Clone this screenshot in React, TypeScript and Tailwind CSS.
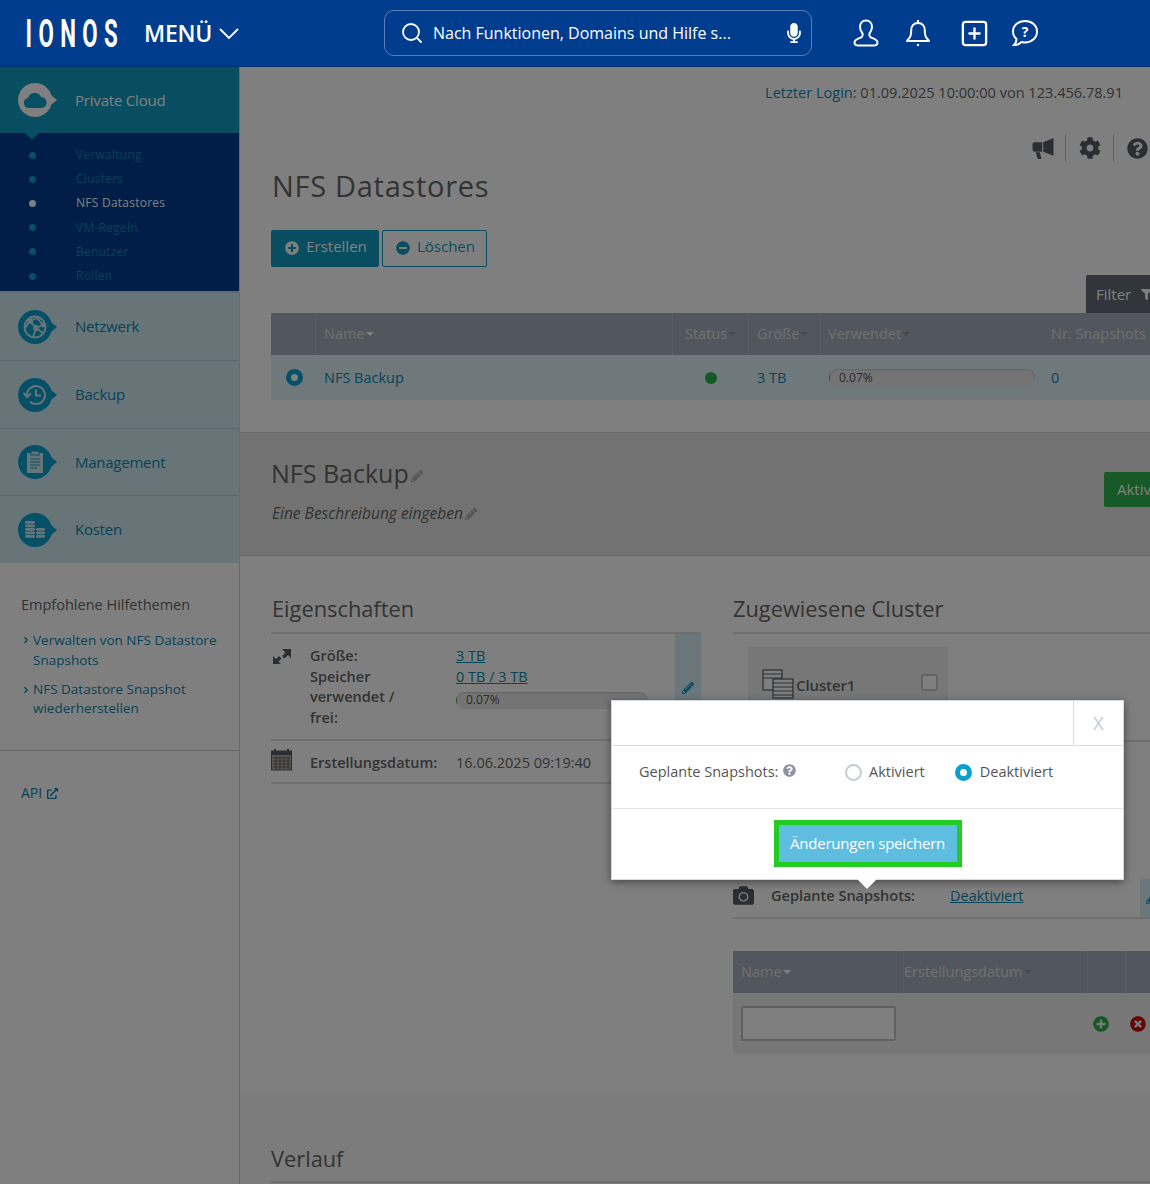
import React from "react";
import { Search, SquarePlus, ChevronRight } from "lucide-react";
import { FaCog, FaQuestionCircle, FaCamera, FaPencilAlt, FaPlusCircle, FaMinusCircle, FaTimesCircle, FaMicrophone, FaFilter, FaExternalLinkAlt } from "react-icons/fa";

function Caret({ dark }: { dark?: boolean }) {
  return <span className={"ml-[1px] inline-block h-0 w-0 border-x-[4px] border-t-[4px] border-x-transparent align-middle " + (dark ? "border-t-[#8d929e]" : "border-t-[#ffffff]")} />;
}

function NavBubble({ children, active }: { children: React.ReactNode; active?: boolean }) {
  return (
    <span className="relative flex h-[34px] w-[34px] shrink-0 items-center justify-center">
      <span className={"absolute inset-0 rounded-full " + (active ? "bg-[#ffffff]" : "bg-[#0a9fcf]")} />
      <span className={"absolute right-[-5px] top-[12px] h-0 w-0 border-y-[5px] border-l-[6px] border-y-transparent " + (active ? "border-l-[#ffffff]" : "border-l-[#0a9fcf]")} />
      <span className="relative flex">{children}</span>
    </span>
  );
}

function NavItem({ label, icon, h, border }: { label: string; icon: React.ReactNode; h: string; border?: boolean }) {
  return (
    <div className={"flex items-center bg-[#cfeaf3] pl-[18px] " + h + (border ? " border-b border-[#b0d0de]" : "")}>
      <NavBubble>{icon}</NavBubble>
      <span className="ml-[23px] text-[15px] tracking-[-0.25px] text-[#0f86ae]">{label}</span>
    </div>
  );
}

const globe = (
  <svg width="26" height="26" viewBox="0 0 26 26" fill="none" stroke="#cfeaf3" strokeWidth="1.800">
    <circle cx="13" cy="13" r="10.500" />
    <path d="M8 7l7-3 6 7-7 3zM8 7l6 7-3 9M14 14l7 5M3 14l5-7" />
    <circle cx="8" cy="7" r="2" fill="#cfeaf3" />
    <circle cx="14" cy="14" r="2" fill="#cfeaf3" />
    <circle cx="21" cy="11" r="1.500" fill="#cfeaf3" />
  </svg>
);
const clock = (
  <svg width="24" height="24" viewBox="0 0 24 24" fill="none" stroke="#cfeaf3" strokeWidth="2">
    <path d="M4 12a9 9 0 1 1 3 6.800" />
    <path d="M0.500 10l3.500 4 4-3.500" />
    <path d="M13 6.500v6h5" />
  </svg>
);
const clip = (
  <svg width="20" height="24" viewBox="0 0 20 24">
    <rect x="2" y="3" width="16" height="20" fill="#cfeaf3" />
    <rect x="6" y="1" width="8" height="4" fill="#cfeaf3" stroke="#0a9fcf" />
    <path d="M5 9h10M5 12h10M5 15h10M5 18h7" stroke="#0a9fcf" strokeWidth="1.200" />
  </svg>
);
const coins = (
  <svg width="20" height="18" viewBox="0 0 20 18" fill="#cfeaf3">
    <rect x="0" y="0" width="10" height="2.800" rx="1.400" />
    <rect x="0" y="3.500" width="10" height="2.800" rx="1.400" />
    <rect x="0" y="7" width="10" height="2.800" rx="1.400" />
    <rect x="0" y="10.500" width="10" height="2.800" rx="1.400" />
    <rect x="0" y="14" width="10" height="2.800" rx="1.400" />
    <rect x="11" y="7" width="9" height="2.800" rx="1.400" />
    <rect x="11" y="10.500" width="9" height="2.800" rx="1.400" />
    <rect x="11" y="14" width="9" height="2.800" rx="1.400" />
  </svg>
);
const cloud = (
  <svg width="24" height="18" viewBox="0 0 24 18" fill="#0d9ecb">
    <path d="M6 17a5 5 0 0 1-1-9.900A7 7 0 0 1 18 6a5.500 5.500 0 0 1 0 11z" />
  </svg>
);

function SubItem({ label, active }: { label: string; active?: boolean }) {
  return (
    <div className="flex h-[24.2px] items-center">
      <span className={"relative ml-[29px] h-[7px] w-[7px] rounded-full " + (active ? "bg-[#ffffff]" : "bg-[#0f9fc9]")} />
      <span className={"ml-[40px] text-[12px] tracking-[0.25px] " + (active ? "text-[#ffffff]" : "text-[#0f86b0]")}>{label}</span>
    </div>
  );
}

function Sidebar() {
  return (
    <aside className="flex w-[240px] shrink-0 flex-col border-r border-[#d4d4d4]">
      <div className="relative flex h-[66px] items-center bg-[#119cc0] pl-[18px]">
        <NavBubble active>{cloud}</NavBubble>
        <span className="ml-[23px] text-[15px] tracking-[-0.2px] text-[#ffffff]">Private Cloud</span>
        <span className="absolute bottom-[-7px] left-[25px] z-10 h-0 w-0 border-x-[7px] border-t-[7px] border-x-transparent border-t-[#119cc0]" />
      </div>
      <div className="h-[160px] border-b-2 border-[#c0d0e0] bg-[#003d8f] pt-[10px]">
        <SubItem label="Verwaltung" />
        <SubItem label="Clusters" />
        <SubItem label="NFS Datastores" active />
        <SubItem label="VM-Regeln" />
        <SubItem label="Benutzer" />
        <SubItem label="Rollen" />
      </div>
      <NavItem label="Netzwerk" icon={globe} h="h-[68px]" border />
      <NavItem label="Backup" icon={clock} h="h-[68px]" border />
      <NavItem label="Management" icon={clip} h="h-[67px]" border />
      <NavItem label="Kosten" icon={coins} h="h-[67px]" />
      <div className="pl-[21px] pr-[8px] pt-[32px] text-[13.500px]">
        <div className="text-[14.500px] leading-[20px] text-[#666666]">Empfohlene Hilfethemen</div>
        <div className="mt-[15px] flex leading-[20px] text-[#0f86ae]">
          <ChevronRight size={10} strokeWidth={3} className="mt-[5px] mr-[2px] shrink-0" />
          <span>Verwalten von NFS Datastore Snapshots</span>
        </div>
        <div className="mt-[10px] flex leading-[19px] text-[#0f86ae]">
          <ChevronRight size={10} strokeWidth={3} className="mt-[5px] mr-[2px] shrink-0" />
          <span className="w-[170px]">NFS Datastore Snapshot wiederherstellen</span>
        </div>
      </div>
      <div className="mt-[32px] border-t border-[#c8c8c8] pl-[21px] pt-[32px] text-[14px] leading-[20px] text-[#0f86ae]">
        <span className="flex items-center gap-[5px]">API <FaExternalLinkAlt size={11} /></span>
      </div>
    </aside>
  );
}

function Progress({ w }: { w: string }) {
  return (
    <div className={"relative flex h-[17px] items-center overflow-hidden rounded-full bg-[#e9e9e9] pl-[10px] text-[12px] text-[#555555] shadow-[inset_0_1px_2px_rgba(0,0,0,0.15)] " + w}>
      <span className="absolute left-0 top-[3px] h-[11px] w-[1px] bg-[#2bb04a]" />
      0.07%
    </div>
  );
}

function Th({ children, w, sep = true, pad = "pl-[8px]" }: { children?: React.ReactNode; w: string; sep?: boolean; pad?: string }) {
  return <div className={"flex h-full shrink-0 items-center " + pad + " " + w + (sep ? " border-r border-[#b5bac6]" : "")}>{children}</div>;
}

function Main() {
  return (
    <main className="min-w-0 flex-1 overflow-hidden">
      <div className="pl-[31px]">
        <div className="pr-[27px] pt-[16px] text-right text-[14.550px] leading-[19px] text-[#666666]">
          <span className="text-[#1088ae]">Letzter Login</span>: 01.09.2025 10:00:00 von 123.456.78.91
        </div>
        <div className="mt-[31px] flex h-[30px] items-center justify-end text-[#555a63]">
          <svg width="22" height="21" viewBox="0 0 20 20" fill="#555a63">
            <path d="M0 6Q0 4 2 4H9.200V13H2Q0 13 0 11z" />
            <path d="M3 13.500h4l1.500 6.500H5z" />
            <path d="M10.200 4L20 0V17L10.200 13z" />
          </svg>
          <span className="mx-[11px] h-[28px] w-[1px] bg-[#c4c4c4]" />
          <FaCog size={22} className="mr-[1px] ml-[2px]" />
          <span className="ml-[11px] mr-[13px] h-[28px] w-[1px] bg-[#c4c4c4]" />
          <FaQuestionCircle size={21} className="mr-[2px]" />
        </div>
        <h1 className="ml-[1px] mt-[3px] h-[40px] text-[29px] leading-[40px] tracking-[0.7px] text-[#666666]">NFS Datastores</h1>
        <div className="mt-[24px] flex h-[37px] gap-[3px] text-[15px] leading-[32px]">
          <button className="flex w-[108px] items-start justify-center gap-[7px] rounded-[2px] bg-[#119cc0] pl-[2px] text-[#ffffff]">
            <FaPlusCircle size={14} className="mt-[11px]" /> Erstellen
          </button>
          <button className="flex w-[105px] items-start justify-center gap-[7px] rounded-[2px] border border-[#119cc0] bg-[#ffffff] pl-[2px] leading-[30px] text-[#119cc0]">
            <FaMinusCircle size={14} className="mt-[10px]" /> Löschen
          </button>
        </div>
        <div className="mt-[8px] flex h-[38px] w-[879px] justify-end">
          <div className="flex w-[64px] shrink-0 items-center gap-[10px] overflow-hidden rounded-tl-[2px] bg-[#646a78] pl-[10px] text-[15px] text-[#ffffff]">
            Filter <FaFilter size={11} className="shrink-0" />
          </div>
        </div>
        <div className="flex h-[42px] w-[1000px] items-center bg-[#a5acbd] text-[14.500px] text-[#e0e0e0]">
          <Th w="w-[45px]" />
          <Th w="w-[357px]">Name<Caret /></Th>
          <Th w="w-[76px]" pad="pl-[12px]">Status<Caret dark /></Th>
          <Th w="w-[72px]">Größe<Caret dark /></Th>
          <Th w="w-[223px]" sep={false} pad="pl-[7px]">Verwendet<Caret dark /></Th>
          <Th w="w-[200px]" sep={false} pad="pl-[7px]">Nr. Snapshots</Th>
        </div>
        <div className="flex h-[45px] w-[1000px] items-center bg-[#dff3f8] text-[14.500px] text-[#1088ae]">
          <div className="flex w-[45px] shrink-0 justify-center pl-[2px]">
            <span className="h-[17px] w-[17px] rounded-full border-[5px] border-[#0a9fcf] bg-[#ffffff]" />
          </div>
          <div className="w-[357px] shrink-0 pl-[8px]">NFS Backup</div>
          <div className="flex w-[76px] shrink-0 justify-center"><span className="mr-[1px] h-[12px] w-[12px] rounded-full bg-[#2bb04a]" /></div>
          <div className="w-[72px] shrink-0 pl-[8px]">3 TB</div>
          <div className="w-[223px] shrink-0 pl-[8px]"><Progress w="w-[206px]" /></div>
          <div className="pl-[7px]">0</div>
        </div>
      </div>

      <div className="mt-[32px] flex h-[124px] border-y border-[#d6d6d6] bg-[#e4e4e4] pl-[32px]">
        <div className="w-[832px] shrink-0">
          <div className="ml-[-1px] mt-[25px] flex h-[30px] items-center text-[25px] leading-[30px] text-[#666666]">
            NFS Backup
            <FaPencilAlt size={12} className="ml-[2px] mt-[6px] text-[#a8a8a8]" />
          </div>
          <div className="mt-[16px] flex h-[20px] items-center text-[15.500px] italic text-[#666666]">
            Eine Beschreibung eingeben
            <FaPencilAlt size={12} className="ml-[2px] text-[#a8a8a8]" />
          </div>
        </div>
        <div className="mt-[39px] flex h-[35px] w-[100px] shrink-0 items-center rounded-[2px] bg-[#2fb34f] pl-[13px] text-[15px] text-[#ffffff]">Aktivieren</div>
      </div>

      <div className="flex pl-[31px]">
        <section className="w-[430px] shrink-0">
          <h2 className="ml-[1px] mt-[38px] h-[30px] text-[21.800px] leading-[30px] text-[#666666]">Eigenschaften</h2>
          <div className="mt-[8px] flex h-[109px] border-y-2 border-[#dedede] text-[14.500px] leading-[20.500px] text-[#666666]">
            <svg width="18" height="17" viewBox="0 0 18 17" fill="#555a63" className="ml-[2px] mt-[14px] shrink-0">
              <path d="M9 1h9v9l-3-3-3.500 3.500-2.500-2.500 3.500-3.500z" />
              <path d="M0 16V8l3 3 3-3 2.500 2.500-3 3 2.500 2.500z" />
            </svg>
            <div className="ml-[19px] mt-[12px] w-[146px] shrink-0 pr-[45px] font-semibold">
              <div>Größe:</div>
              <div>Speicher verwendet / frei:</div>
            </div>
            <div className="mt-[12px] w-[200px] shrink-0 text-[#1088ae]">
              <div className="underline">3 TB</div>
              <div className="underline">0 TB / 3 TB</div>
              <div className="mt-[5px]"><Progress w="w-[192px]" /></div>
            </div>
            <div className="ml-auto flex w-[26px] shrink-0 items-center justify-center bg-[#d7eef5] pt-[2px] text-[#0a9fcf]">
              <FaPencilAlt size={12} />
            </div>
          </div>
          <div className="flex h-[43px] items-center border-b-2 border-[#dedede] pt-[2px] text-[14.500px] text-[#666666]">
            <svg width="21" height="22" viewBox="0 0 21 22" className="mb-[5px] shrink-0">
              <rect x="0.500" y="2" width="20" height="19" fill="#b5a89c" stroke="#555a63" />
              <rect x="0" y="2" width="21" height="4" fill="#555a63" />
              <path d="M4 0v3M17 0v3" stroke="#555a63" strokeWidth="2" />
              <path d="M2 9h17M2 12h17M2 15h17M2 18h17M5 7v13M9 7v13M13 7v13M17 7v13" stroke="#555a63" strokeWidth="0.800" />
            </svg>
            <span className="ml-[18px] w-[146px] shrink-0 font-semibold">Erstellungsdatum:</span>
            <span>16.06.2025 09:19:40</span>
          </div>
        </section>

        <section className="ml-[32px] w-[500px] shrink-0">
          <h2 className="mt-[38px] h-[30px] text-[21.800px] leading-[30px] text-[#666666]">Zugewiesene Cluster</h2>
          <div className="mt-[8px] h-[110px] border-y-2 border-[#dedede] pl-[15px] pt-[13px]">
            <div className="flex h-[90px] w-[200px] items-start rounded-[3px] bg-[#efefef] pl-[14px] pt-[22px]">
              <svg width="32" height="30" viewBox="0 0 32 30" fill="#ffffff" stroke="#555a63" strokeWidth="1.200" className="shrink-0">
                <rect x="1" y="1" width="19" height="20" />
                <path d="M1 5h19M1 9h19" />
                <rect x="11" y="10" width="20" height="19" />
                <path d="M11 14h20M11 18h20M11 22h20M11 26h20" />
              </svg>
              <span className="ml-[2px] mt-[5px] text-[15px] font-semibold tracking-[-0.1px] text-[#666666]">Cluster1</span>
              <span className="ml-[66px] mt-[5px] h-[17px] w-[17px] rounded-[3px] border-2 border-[#c8c8c8] bg-[#ffffff]" />
            </div>
          </div>
          <div className="mt-[137px] flex h-[40px] items-center border-b-2 border-[#dedede] pb-[5px] text-[14.500px] text-[#666666]">
            <FaCamera size={21} className="shrink-0 text-[#555a63]" />
            <span className="ml-[17px] w-[179px] shrink-0 font-semibold">Geplante Snapshots:</span>
            <span className="text-[#1088ae] underline">Deaktiviert</span>
            <span className="ml-[117px] mb-[-5px] flex h-[38px] w-[26px] items-center bg-[#d7eef5] pl-[6px] text-[#0a9fcf]"><FaPencilAlt size={12} /></span>
          </div>
          <div className="mt-[32px] flex h-[42px] w-[500px] items-center bg-[#a5acbd] text-[14.500px] text-[#e0e0e0]">
            <Th w="w-[171px]">Name<Caret /></Th>
            <div className="flex h-full w-[184px] shrink-0 items-center border-r border-[#b5bac6]">Erstellungsdatum<Caret dark /></div>
            <Th w="w-[38px]" />
            <Th w="w-[38px]" sep={false} />
          </div>
          <div className="flex h-[61px] w-[500px] items-center bg-[#eeeeee]">
            <div className="w-[354px] shrink-0 pl-[8px]">
              <input className="block h-[35px] w-[155px] rounded-[2px] border-2 border-[#c0c0c0] bg-[#ffffff]" />
            </div>
            <FaPlusCircle size={16} className="ml-[6px] shrink-0 text-[#2bb04a]" />
            <FaTimesCircle size={16} className="ml-[21px] shrink-0 text-[#c80a0a]" />
          </div>
        </section>
      </div>

      <div className="mt-[40px] h-[90px] bg-[#f8f8f8] pl-[31px] pt-[50px]">
        <div className="h-[39px] border-b-2 border-[#dedede] text-[21.800px] leading-[30px] text-[#666666]">Verlauf</div>
      </div>
    </main>
  );
}

function Modal() {
  return (
    <div className="absolute left-[611px] top-[700px] z-20 flex h-[180px] w-[513px] flex-col border border-[#d5d9e0] bg-[#ffffff] shadow-[0_2px_8px_rgba(0,0,0,0.45)]">
      <div className="flex h-[45px] border-b border-[#d7dbe2]">
        <div className="ml-auto flex w-[50px] items-center justify-center border-l border-[#d7dbe2] text-[18px] text-[#c3c9d4]">X</div>
      </div>
      <div className="flex h-[63px] items-center border-b border-[#e1e4e9] pb-[10px] pl-[27px] text-[14.500px] text-[#555555]">
        <span className="flex w-[206px] shrink-0 items-center gap-[5px]">
          Geplante Snapshots:
          <FaQuestionCircle size={13} className="mb-[3px] text-[#8c93a3]" />
        </span>
        <span className="h-[17px] w-[17px] rounded-full border-2 border-[#c5cbd5] bg-[#ffffff]" />
        <span className="ml-[7px]">Aktiviert</span>
        <span className="ml-[30px] h-[17px] w-[17px] rounded-full border-[5px] border-[#0a9fcf] bg-[#ffffff]" />
        <span className="ml-[8px]">Deaktiviert</span>
      </div>
      <div className="flex flex-1 items-start justify-center pt-[11px]">
        <button className="h-[47px] w-[188px] border-[5px] border-[#22cc22] bg-[#5fbde0] text-[15px] tracking-[-0.2px] text-[#ffffff]">Änderungen speichern</button>
      </div>
      <span className="absolute bottom-[-10px] left-[245px] h-0 w-0 border-x-[10px] border-t-[10px] border-x-transparent border-t-[#ffffff]" />
    </div>
  );
}

export default function App() {
  return (
    <div className="relative h-[1184px] w-full overflow-hidden bg-[#ffffff] font-['Open_Sans',sans-serif]">
      <header className="flex h-[67px] items-center border-b border-[#002f70] bg-[#003d8f] text-[#ffffff]">
        <svg width="94" height="30" viewBox="0 0 152 28" preserveAspectRatio="none" className="ml-[25px] mt-[1px] shrink-0">
          <text x="1" y="26" fontFamily="Roboto, sans-serif" fontWeight="700" fontSize="36" fill="#ffffff" textLength="149" lengthAdjust="spacing">IONOS</text>
        </svg>
        <span className="ml-[25px] text-[23px] font-semibold tracking-[-0.3px]">MENÜ</span>
        <svg width="20" height="12" viewBox="0 0 20 12" fill="none" stroke="#ffffff" strokeWidth="1.800" className="ml-[7px] mt-[2px] shrink-0">
          <path d="M1 1l9 9 9-9" />
        </svg>
        <div className="ml-[145px] flex h-[46px] w-[428px] shrink-0 items-center rounded-[10px] border border-[#5a7fb8] pl-[15px] text-[16px]">
          <Search size={24} strokeWidth={1.8} className="shrink-0" />
          <span className="ml-[9px]">Nach Funktionen, Domains und Hilfe s...</span>
          <FaMicrophone size={20} className="ml-auto mr-[7px] shrink-0" />
        </div>
        <svg width="26" height="28" viewBox="0 0 26 28" fill="none" stroke="#ffffff" strokeWidth="2" className="ml-[41px] shrink-0">
          <path d="M13 1.500c-3.800 0-6 3-6 6.500 0 3 1.500 5 2.500 6.500.5 1 0 3-1.500 4-2.500 1-6.500 2-6.500 5 0 2 2 3 4 3h15c2 0 4-1 4-3 0-3-4-4-6.500-5-1.500-1-2-3-1.500-4 1-1.500 2.500-3.500 2.500-6.500 0-3.500-2.200-6.500-6-6.500z" />
        </svg>
        <svg width="24" height="28" viewBox="0 0 24 28" fill="none" stroke="#ffffff" strokeWidth="2" strokeLinejoin="round" className="ml-[27px] shrink-0">
          <path d="M12 4c-4.500 0-6.800 3.200-6.800 7.500 0 4-.7 6.500-2.200 8-1 1-2 2-2 2.500h22c0-.5-1-1.500-2-2.500-1.500-1.500-2.200-4-2.200-8C18.800 7.200 16.500 4 12 4zM12 1v3" />
          <circle cx="12" cy="26" r="1.200" fill="#ffffff" stroke="none" />
        </svg>
        <SquarePlus size={31} strokeWidth={1.8} className="ml-[29px] shrink-0" />
        <svg width="28" height="28" viewBox="0 0 28 28" fill="none" stroke="#ffffff" strokeWidth="2" className="ml-[21px] shrink-0">
          <path d="M14 2C7 2 2 6.500 2 12.500c0 3 1.300 5.600 3.500 7.500 0 2.500-1 4.500-2.500 6 3 .2 5.500-1 7.500-3 1.200.3 2.400.5 3.500.5 7 0 12-4.800 12-11S21 2 14 2z" />
          <text x="14" y="18" textAnchor="middle" fontFamily="Open Sans, sans-serif" fontWeight="700" fontSize="14" fill="#ffffff" stroke="none">?</text>
        </svg>
      </header>
      <div className="flex h-[1117px]">
        <Sidebar />
        <Main />
      </div>
      <div className="absolute inset-x-0 bottom-0 top-[67px] z-10 bg-[#000000]/50" />
      <Modal />
    </div>
  );
}
